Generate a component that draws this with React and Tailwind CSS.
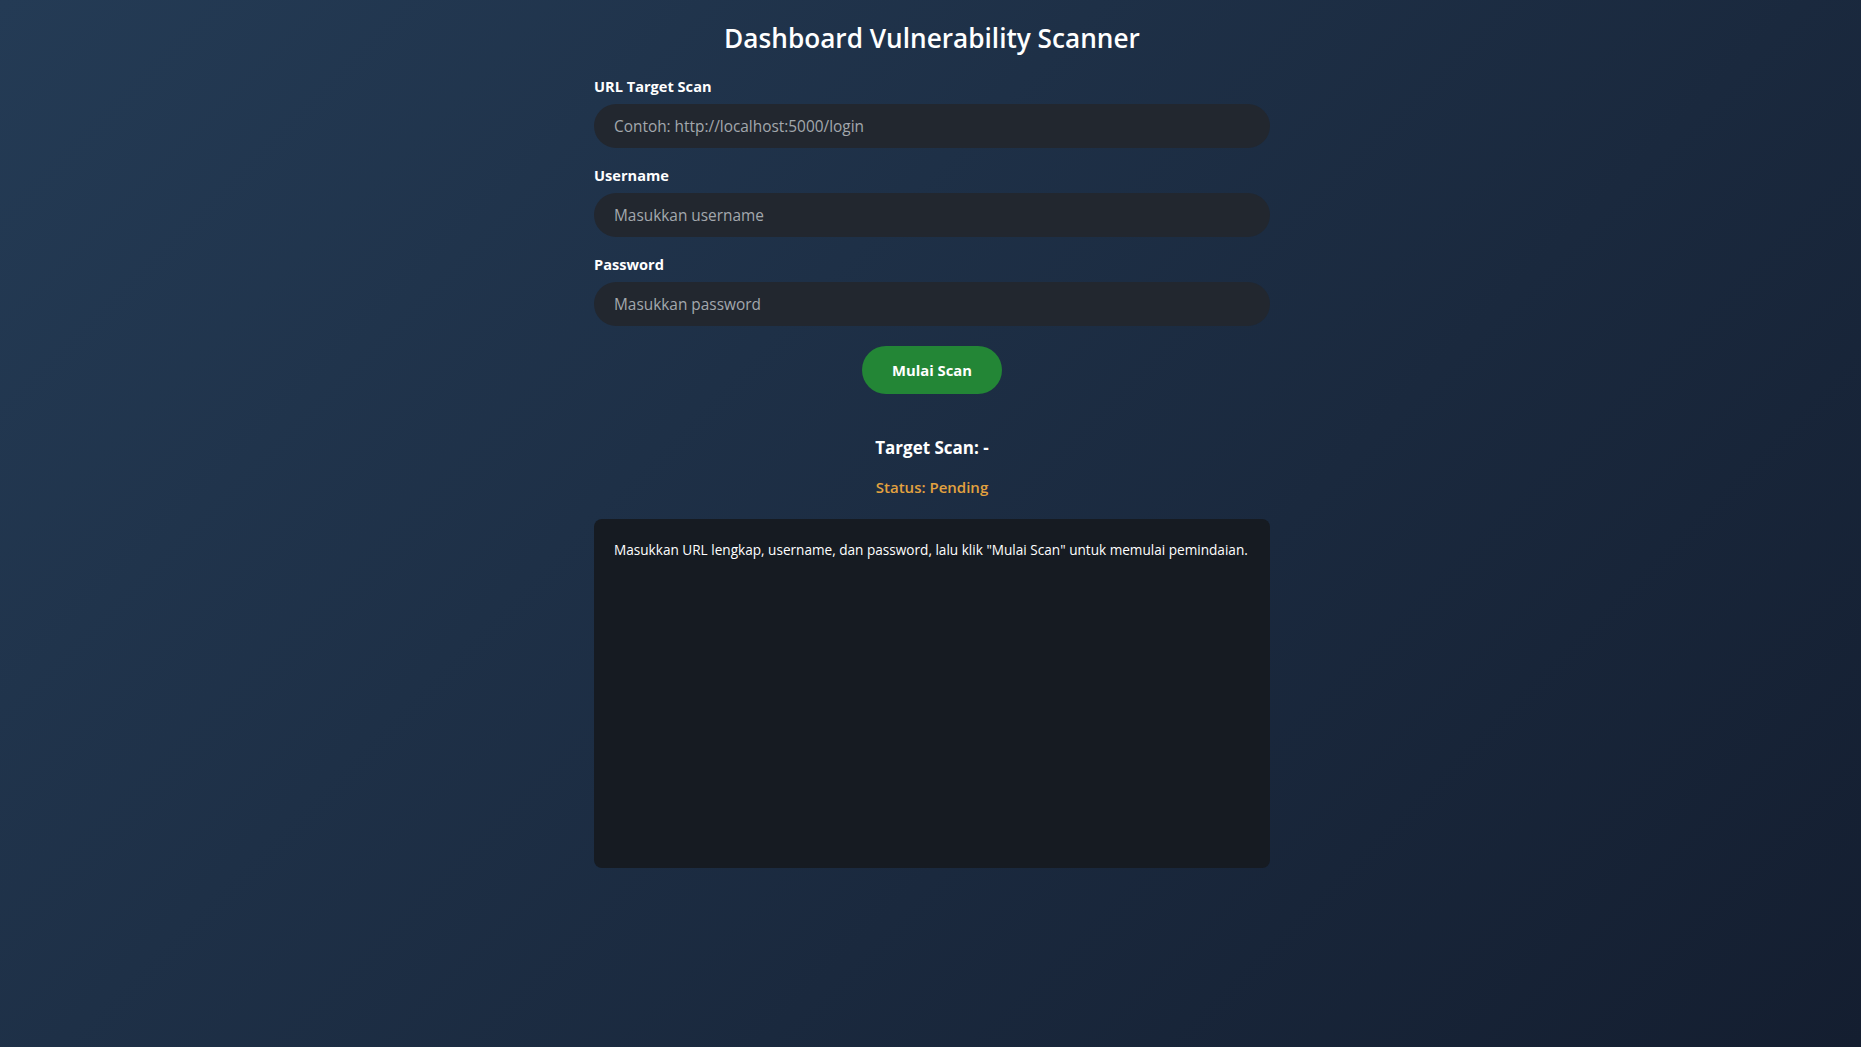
export default function App() {
  const font = { fontFamily: '"Open Sans", "Noto Sans", sans-serif' };
  return (
    <div
      className="min-h-screen w-full bg-[linear-gradient(135deg,#243b55,#141e30)] pl-[3px] text-white"
      style={font}
    >
      <div className="mx-auto flex w-[676px] flex-col pt-[21px]">
        <h1 className="text-center text-[26.2px] font-semibold leading-[34px] text-white">
          Dashboard Vulnerability Scanner
        </h1>

        <form className="mt-[21px] flex flex-col" onSubmit={(e) => e.preventDefault()}>
          <label htmlFor="url" className="block text-[14.6px] font-bold leading-[20px] text-white">
            URL Target Scan
          </label>
          <input
            id="url"
            type="text"
            placeholder="Contoh: http://localhost:5000/login"
            className="mt-[8px] h-[44px] w-full rounded-full bg-[#22272f] px-[20px] text-[15.4px] text-white outline-none placeholder:text-[#a3a7ad]"
          />

          <label htmlFor="username" className="mt-[17px] block text-[14.6px] font-bold leading-[20px] text-white">
            Username
          </label>
          <input
            id="username"
            type="text"
            placeholder="Masukkan username"
            className="mt-[8px] h-[44px] w-full rounded-full bg-[#22272f] px-[20px] text-[15.4px] text-white outline-none placeholder:text-[#a3a7ad]"
          />

          <label htmlFor="password" className="mt-[17px] block text-[14.6px] font-bold leading-[20px] text-white">
            Password
          </label>
          <input
            id="password"
            type="password"
            placeholder="Masukkan password"
            className="mt-[8px] h-[44px] w-full rounded-full bg-[#22272f] px-[20px] text-[15.4px] text-white outline-none placeholder:text-[#a3a7ad]"
          />

          <div className="mt-[20px] flex justify-center">
            <button
              type="submit"
              className="h-[48px] w-[140px] rounded-full bg-[#238636] text-[14.8px] font-bold text-white"
            >
              Mulai Scan
            </button>
          </div>
        </form>

        <h2 className="mt-[42px] text-center text-[17px] font-bold leading-[24px] text-white">
          Target Scan: -
        </h2>
        <p className="mt-[17px] text-center text-[15px] font-semibold leading-[20px] text-[#e3a23f]">
          Status: Pending
        </p>

        <div className="mt-[22px] h-[349px] rounded-[8px] bg-[#161b22] px-[20px] pt-[21px]">
          <p className="text-[13.6px] leading-[20px] text-white">
            Masukkan URL lengkap, username, dan password, lalu klik "Mulai Scan" untuk memulai pemindaian.
          </p>
        </div>
      </div>
    </div>
  );
}
